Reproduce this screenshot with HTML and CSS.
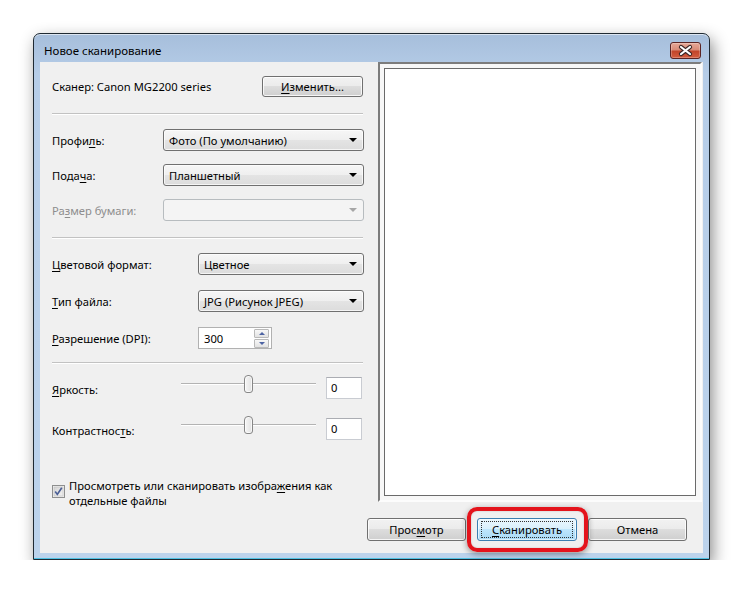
FILE: index.html
```html
<!DOCTYPE html>
<html lang="ru">
<head>
    <meta charset="UTF-8">
    <title>Новое сканирование</title>
    <link rel="stylesheet" href="styles.css">
</head>
<body>
    <div class="window">
        <div class="titlebar">
            <span class="title">Новое сканирование</span>
            <button class="close-btn" title="Закрыть">
                <svg width="31" height="17" viewBox="0 0 31 17">
                    <path d="M11 5 L20 12 M20 5 L11 12" stroke="#3a2525" stroke-width="4.2" stroke-linecap="round"/>
                    <path d="M11 5 L20 12 M20 5 L11 12" stroke="#fff" stroke-width="2.2" stroke-linecap="round"/>
                </svg>
            </button>
        </div>

        <div class="client">
            <div class="main">
                <div class="settings">
                    <div class="scanner-row">
                        <span>Сканер: Canon MG2200 series</span>
                        <button class="btn btn-change"><u>И</u>зменить...</button>
                    </div>

                    <div class="sep"></div>

                    <div class="field first">
                        <label class="lbl lbl-short">Профи<u>л</u>ь:</label>
                        <div class="combo combo-wide">Фото (По умолчанию)</div>
                    </div>
                    <div class="field">
                        <label class="lbl lbl-short">Пода<u>ч</u>а:</label>
                        <div class="combo combo-wide">Планшетный</div>
                    </div>
                    <div class="field">
                        <label class="lbl lbl-short disabled">Ра<u>з</u>мер бумаги:</label>
                        <div class="combo combo-wide combo-disabled"></div>
                    </div>

                    <div class="sep sep-mid"></div>

                    <div class="field first-b">
                        <label class="lbl lbl-long"><u>Ц</u>ветовой формат:</label>
                        <div class="combo combo-narrow">Цветное</div>
                    </div>
                    <div class="field wide-gap">
                        <label class="lbl lbl-long"><u>Т</u>ип файла:</label>
                        <div class="combo combo-narrow">JPG (Рисунок JPEG)</div>
                    </div>
                    <div class="field wide-gap">
                        <label class="lbl lbl-long"><u>Р</u>азрешение (DPI):</label>
                        <div class="spin">
                            <span class="spin-value">300</span>
                            <div class="spin-buttons">
                                <span class="spin-btn"><i class="tri-up"></i></span>
                                <span class="spin-btn"><i class="tri-down"></i></span>
                            </div>
                        </div>
                    </div>

                    <div class="sep sep-low"></div>

                    <div class="slider-row first">
                        <label class="lbl lbl-slider"><u>Я</u>ркость:</label>
                        <div class="slider"><span class="thumb"></span></div>
                        <div class="edit">0</div>
                    </div>
                    <div class="slider-row second">
                        <label class="lbl lbl-slider">Контрастнос<u>т</u>ь:</label>
                        <div class="slider"><span class="thumb"></span></div>
                        <div class="edit">0</div>
                    </div>

                    <div class="check-row">
                        <svg class="checkbox" width="13" height="13" viewBox="0 0 13 13">
                            <defs>
                                <linearGradient id="cbg" x1="0" y1="0" x2="1" y2="1">
                                    <stop offset="0" stop-color="#d4d4d4"/>
                                    <stop offset="1" stop-color="#f2f2f2"/>
                                </linearGradient>
                            </defs>
                            <rect x="0.5" y="0.5" width="12" height="12" fill="#f0f0f0" stroke="#8e8f8f"/>
                            <rect x="2" y="2" width="9" height="9" fill="url(#cbg)" stroke="#c0c0c0" stroke-width="0.6"/>
                            <path d="M3.2 6.6 L5.3 9.4 L9.8 2.8" fill="none" stroke="#4b5f96" stroke-width="1.7"/>
                        </svg>
                        <span>Просмотреть или сканировать изобра<u>ж</u>ения как<br>отдельные файлы</span>
                    </div>
                </div>

                <div class="preview">
                    <div class="preview-page"></div>
                </div>
            </div>

            <div class="actions">
                <button class="btn btn-action">Прос<u>м</u>отр</button>
                <span class="highlight">
                    <button class="btn btn-action btn-default"><span class="focus"><u>С</u>канировать</span></button>
                </span>
                <button class="btn btn-action">Отмена</button>
            </div>
        </div>
    </div>
</body>
</html>
```

FILE: styles.css
```css
* {
    box-sizing: border-box;
}

body {
    margin: 0;
    padding: 33px 0 0 33px;
    background-color: #fff;
    font-family: "Noto Sans", "Open Sans", sans-serif;
    font-size: 11.2px;
    color: #000;
}

u {
    text-decoration: underline;
    text-underline-offset: 2px;
}

/* Janela */
.window {
    width: 677px;
    height: 527px;
    padding: 0 6px 6px 6px;
    border: 1px solid #1f2a33;
    border-radius: 7px 7px 0 0;
    background: linear-gradient(#a6bedb, #b6cde8 40px, #bcd3ec);
    box-shadow: inset 0 1px 0 rgba(255, 255, 255, 0.6), inset 0 -1px 0 #4fc1e3, 3px 6px 16px rgba(0, 0, 0, 0.45);
}

.titlebar {
    height: 28px;
    display: flex;
    align-items: flex-start;
    justify-content: space-between;
    padding: 8px 0 0 4px;
}

.title {
    font-size: 11.5px;
    line-height: 16px;
    margin-top: 1px;
    color: #000;
}

.close-btn {
    width: 31px;
    height: 17px;
    margin-right: 2px;
    padding: 0;
    border: 1px solid #5b2424;
    border-radius: 3px;
    background: linear-gradient(#e6a898 0%, #d98b78 45%, #c2452b 55%, #d35d40 100%);
    box-shadow: inset 0 0 0 1px rgba(255, 255, 255, 0.25);
    display: flex;
    align-items: center;
    justify-content: center;
}

.close-btn svg {
    display: block;
    margin: -1px;
}

/* Area cliente */
.client {
    height: 491px;
    background-color: #f0f0f0;
    display: flex;
    flex-direction: column;
}

.main {
    height: 440px;
    display: flex;
}

.settings {
    width: 338px;
    padding: 14px 14px 0 12px;
    display: flex;
    flex-direction: column;
}

.scanner-row {
    height: 21px;
    display: flex;
    align-items: center;
    justify-content: space-between;
}

.sep {
    height: 2px;
    margin: 16px 1px 0 0;
    border-top: 1px solid #c2c2c2;
    border-bottom: 1px solid #fff;
}

.sep-mid {
    margin-top: 16px;
}

.sep-low {
    margin-top: 13px;
}

.field {
    height: 22px;
    margin-top: 13px;
    display: flex;
    align-items: center;
}

.field.first {
    margin-top: 14px;
}

.field.first-b {
    margin-top: 14px;
}

.field.wide-gap {
    margin-top: 15px;
}

.lbl {
    flex: 0 0 auto;
}

.lbl-short {
    width: 111px;
}

.lbl-long {
    width: 146px;
}

.lbl-slider {
    width: 129px;
}

.lbl.disabled {
    color: #8d8d8d;
}

/* Botoes */
.btn {
    font-family: inherit;
    font-size: 11.2px;
    color: #000;
    padding: 0;
    border: 1px solid #707070;
    border-radius: 3px;
    background: linear-gradient(#f2f2f2 0%, #ebebeb 50%, #dddddd 50%, #cfcfcf 100%);
    box-shadow: inset 0 0 0 1px rgba(255, 255, 255, 0.8);
}

.btn-change {
    width: 101px;
    height: 21px;
    margin-right: 1px;
}

/* Combobox */
.combo {
    height: 22px;
    display: flex;
    align-items: center;
    padding: 0 6px 0 5px;
    border: 1px solid #707070;
    border-radius: 3px;
    background: linear-gradient(#f6f6f6 0%, #efefef 50%, #e4e4e4 50%, #dcdcdc 100%);
    box-shadow: inset 0 0 0 1px rgba(255, 255, 255, 0.7);
    white-space: nowrap;
}

.combo::after {
    content: "";
    margin-left: auto;
    border-left: 4px solid transparent;
    border-right: 4px solid transparent;
    border-top: 4px solid #000;
}

.combo-wide {
    width: 201px;
}

.combo-narrow {
    width: 166px;
}

.combo-disabled {
    border-color: #b7bcbf;
    background: #f4f4f4;
    box-shadow: none;
}

.combo-disabled::after {
    border-top-color: #a6a6a6;
}

/* Campo numerico */
.spin {
    width: 74px;
    height: 22px;
    display: flex;
    align-items: center;
    border: 1px solid #b1b1b1;
    background-color: #fff;
}

.spin-value {
    flex: 1;
    padding-left: 5px;
}

.spin-buttons {
    width: 15px;
    margin-right: 2px;
    display: flex;
    flex-direction: column;
    gap: 1px;
}

.spin-btn {
    height: 9px;
    display: flex;
    align-items: center;
    justify-content: center;
    border: 1px solid #b9b9b9;
    border-radius: 1px;
    background: linear-gradient(#f8f8f8, #e2e2e2);
}

.tri-up {
    border-left: 3px solid transparent;
    border-right: 3px solid transparent;
    border-bottom: 3px solid #4d63a3;
}

.tri-down {
    border-left: 3px solid transparent;
    border-right: 3px solid transparent;
    border-top: 3px solid #4d63a3;
}

/* Controles deslizantes */
.slider-row {
    height: 22px;
    display: flex;
    align-items: center;
}

.slider-row.first {
    margin-top: 13px;
}

.slider-row.second {
    margin-top: 19px;
}

.slider-row .lbl {
    margin-top: 3px;
}

.slider {
    width: 135px;
    height: 22px;
    display: flex;
    align-items: flex-start;
    background: linear-gradient(transparent 6px, #b3b3b3 6px, #b3b3b3 7px, #fff 7px, #fff 8px, transparent 8px);
}

.thumb {
    width: 9px;
    height: 18px;
    margin: -2px 0 0 63px;
    border: 1px solid #868686;
    border-radius: 4px 4px 3px 3px;
    background: linear-gradient(to right, #f6f6f6, #e2e2e2);
    box-shadow: inset 0 0 0 1px rgba(255, 255, 255, 0.7);
}

.edit {
    width: 36px;
    height: 22px;
    margin-left: 10px;
    padding-left: 4px;
    line-height: 20px;
    border: 1px solid #c9ccd2;
    border-top-color: #abadb3;
    background-color: #fff;
}

/* Caixa de selecao */
.check-row {
    margin-top: 38px;
    display: flex;
    align-items: flex-start;
    line-height: 15px;
}

.checkbox {
    flex: 0 0 13px;
    margin: 7px 4px 0 0;
}

/* Visualizacao */
.preview {
    width: 324px;
    height: 440px;
    padding: 4px;
    border: 2px solid;
    border-color: #7c7c7c #fcfcfc #fcfcfc #7c7c7c;
    background-color: #f7f7f7;
}

.preview-page {
    height: 100%;
    border: 1px solid #6a6a6a;
    background-color: #fff;
}

/* Botoes inferiores */
.actions {
    display: flex;
    justify-content: flex-end;
    gap: 11px;
    padding: 16px 16px 0 0;
}

.btn-action {
    width: 99px;
    height: 23px;
}

.btn-default {
    width: 100px;
    border-color: #3c7fb1;
    background: linear-gradient(#eaf6fd 0%, #d9f0fc 50%, #bee6fd 50%, #a7d9f5 100%);
    box-shadow: inset 0 0 0 1px rgba(255, 255, 255, 0.6);
    display: flex;
    align-items: center;
    justify-content: center;
}

.focus {
    width: 92px;
    height: 17px;
    line-height: 15px;
    border: 1px dotted #333;
}

.highlight {
    position: relative;
    display: flex;
}

.highlight::before {
    content: "";
    position: absolute;
    top: -11px;
    bottom: -11px;
    left: -10px;
    right: -11px;
    border: 4px solid #e4141c;
    border-radius: 10px;
    box-shadow: 0 2px 6px rgba(0, 0, 0, 0.4), inset 0 0 2px rgba(0, 0, 0, 0.2);
}
```
